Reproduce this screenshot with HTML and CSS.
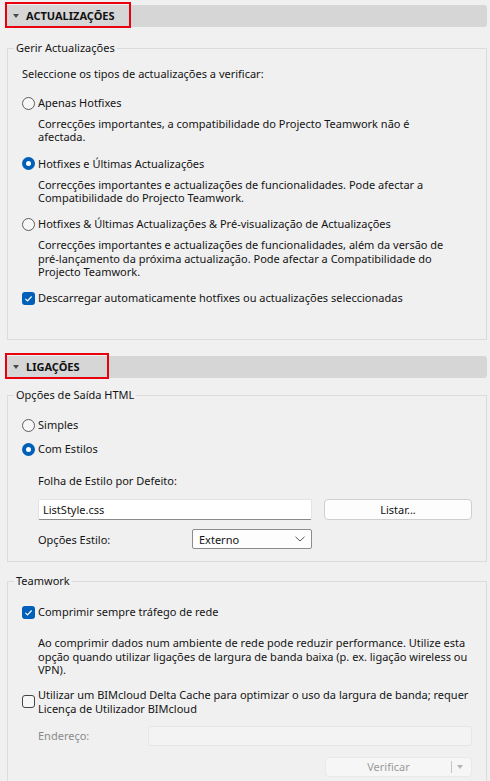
FILE: index.html
```html
<!DOCTYPE html>
<html lang="pt">
<head>
<meta charset="utf-8">
<title>Preferências</title>
<link rel="stylesheet" href="styles.css">
</head>
<body>
<div class="panel">
  <div class="section-head">
    <span class="mark mark-a"></span>
    <span class="caret"></span>
    <span class="head-title">ACTUALIZAÇÕES</span>
  </div>

  <fieldset class="group group-updates">
    <legend>Gerir Actualizações</legend>
    <div class="body body-updates">
      <p class="intro">Seleccione os tipos de actualizações a verificar:</p>
      <label class="opt"><span class="radio"></span>Apenas Hotfixes</label>
      <p class="desc">Correcções importantes, a compatibilidade do Projecto Teamwork não é<br>afectada.</p>
      <label class="opt"><span class="radio on"></span>Hotfixes e Últimas Actualizações</label>
      <p class="desc">Correcções importantes e actualizações de funcionalidades. Pode afectar a<br>Compatibilidade do Projecto Teamwork.</p>
      <label class="opt"><span class="radio"></span>Hotfixes &amp; Últimas Actualizações &amp; Pré-visualização de Actualizações</label>
      <p class="desc">Correcções importantes e actualizações de funcionalidades, além da versão de<br>pré-lançamento da próxima actualização. Pode afectar a Compatibilidade do<br>Projecto Teamwork.</p>
      <label class="opt"><span class="check on"><svg viewBox="0 0 13 13" width="13" height="13"><path d="M3.4 6.9 L5.5 8.9 L9.6 4.5" fill="none" stroke="#fff" stroke-width="1.2"/></svg></span>Descarregar automaticamente hotfixes ou actualizações seleccionadas</label>
    </div>
  </fieldset>

  <div class="section-head section-head-2">
    <span class="mark mark-b"></span>
    <span class="caret"></span>
    <span class="head-title">LIGAÇÕES</span>
  </div>

  <fieldset class="group group-html">
    <legend>Opções de Saída HTML</legend>
    <div class="body body-html">
      <label class="opt opt-first"><span class="radio"></span>Simples</label>
      <label class="opt opt-tight"><span class="radio on"></span>Com Estilos</label>
      <p class="field-label">Folha de Estilo por Defeito:</p>
      <div class="file-row">
        <span class="text-input">ListStyle.css</span>
        <span class="button">Listar...</span>
      </div>
      <div class="style-row">
        <span class="style-label">Opções Estilo:</span>
        <span class="select">Externo<svg class="chev" viewBox="0 0 10 6" width="10" height="6"><path d="M0.5 0.8 L5 5 L9.5 0.8" fill="none" stroke="#555" stroke-width="1"/></svg></span>
      </div>
    </div>
  </fieldset>

  <fieldset class="group group-team">
    <legend>Teamwork</legend>
    <div class="body body-team">
      <label class="opt opt-first-team"><span class="check on"><svg viewBox="0 0 13 13" width="13" height="13"><path d="M3.4 6.9 L5.5 8.9 L9.6 4.5" fill="none" stroke="#fff" stroke-width="1.2"/></svg></span>Comprimir sempre tráfego de rede</label>
      <p class="desc desc-team">Ao comprimir dados num ambiente de rede pode reduzir performance. Utilize esta<br>opção quando utilizar ligações de largura de banda baixa (p. ex. ligação wireless ou<br>VPN).</p>
      <label class="opt opt-multi"><span class="check"></span><span class="multi-text">Utilizar um BIMcloud Delta Cache para optimizar o uso da largura de banda; requer<br>Licença de Utilizador BIMcloud</span></label>
      <div class="addr-row">
        <span class="addr-label">Endereço:</span>
        <span class="text-input disabled"></span>
      </div>
      <div class="verify-row">
        <span class="split-button">
          <span class="split-main">Verificar</span>
          <span class="split-arrow"></span>
        </span>
      </div>
    </div>
  </fieldset>
</div>
</body>
</html>
```
FILE: styles.css
```css
html, body {
  margin: 0;
  padding: 0;
  overflow: hidden;
}

body {
  background: #f0f0f0;
  font-family: "Noto Sans", sans-serif;
  font-size: 11px;
  color: #141414;
  width: 490px;
  height: 781px;
}

p {
  margin: 0;
}

.section-head {
  position: relative;
  margin: 5px 3px 0 5px;
  height: 22px;
  background: #d6d6d6;
  border-radius: 3px;
  display: flex;
  align-items: center;
  padding-left: 8px;
  gap: 7px;
}

.section-head-2 {
  margin-top: 16px;
}

.mark {
  position: absolute;
  left: 0;
  top: -3px;
  height: 26px;
  border: 2px solid #e8000d;
  box-sizing: border-box;
}

.mark-a {
  width: 126px;
}

.mark-b {
  width: 104px;
}

.caret {
  width: 0;
  height: 0;
  border-left: 3.5px solid transparent;
  border-right: 3.5px solid transparent;
  border-top: 4px solid #4a4a4a;
}

.head-title {
  font-weight: 700;
  line-height: 16px;
  color: #111;
}

.group {
  margin: 13px 3px 0 7px;
  border: 1px solid #dcdcdc;
  padding: 0;
  min-width: 0;
}

.group legend {
  margin-left: 6px;
  padding: 0 2px;
  line-height: 16px;
}

.group-html {
  margin-top: 9px;
}

.group-team {
  margin-top: 11px;
}

.body {
  padding: 0 14px 33px 14px;
}

.body-html {
  padding-bottom: 12px;
}

.body-team {
  padding-bottom: 30px;
}

.intro {
  margin-top: 10px;
  line-height: 16px;
}

.opt {
  display: flex;
  align-items: center;
  gap: 3px;
  line-height: 16px;
  margin-top: 13px;
}

.desc {
  margin: 6px 0 0 16px;
  line-height: 13.33px;
}

.desc + .opt {
  margin-top: 12px;
}

.radio {
  width: 13px;
  height: 13px;
  box-sizing: border-box;
  border: 1px solid #5c5c5c;
  border-radius: 50%;
  background: #f7f7f7;
  flex: none;
  display: flex;
  align-items: center;
  justify-content: center;
}

.radio.on {
  border: none;
  background: #005fb8;
}

.radio.on::after {
  content: "";
  width: 5px;
  height: 5px;
  border-radius: 50%;
  background: #fff;
}

.check {
  width: 13px;
  height: 13px;
  box-sizing: border-box;
  border: 1px solid #444;
  border-radius: 3px;
  background: #f7f7f7;
  flex: none;
  display: flex;
}

.check.on {
  border: none;
  background: #005fb8;
}

.opt-first {
  margin-top: 14px;
}

.opt-tight {
  margin-top: 8px;
}

.field-label {
  margin: 16px 0 0 16px;
  line-height: 16px;
}

.file-row {
  display: flex;
  gap: 12px;
  margin: 10px 0 0 16px;
  height: 21px;
}

.text-input {
  flex: 1;
  box-sizing: border-box;
  background: #fff;
  border: 1px solid #e4e4e4;
  border-bottom-color: #8a8a8a;
  border-radius: 2px;
  padding-left: 4px;
  line-height: 19px;
}

.button {
  width: 148px;
  box-sizing: border-box;
  background: #fdfdfd;
  border: 1px solid #cfcfcf;
  border-radius: 4px;
  text-align: center;
  line-height: 19px;
}

.style-row {
  display: flex;
  align-items: center;
  justify-content: space-between;
  margin: 9px 0 0 16px;
  width: 274px;
  height: 20px;
}

.style-label {
  line-height: 16px;
  margin-top: 2px;
}

.select {
  width: 120px;
  height: 20px;
  box-sizing: border-box;
  border: 1px solid #8c8c8c;
  border-radius: 2px;
  background: #fdfdfd;
  padding: 0 6px;
  line-height: 17px;
  display: flex;
  align-items: center;
  justify-content: space-between;
}

.opt-first-team {
  margin-top: 15px;
}

.desc-team {
  margin-top: 16px;
}

.opt-multi {
  margin-top: 10px;
  line-height: 13.33px;
}

.addr-row {
  display: flex;
  align-items: center;
  margin: 11px 0 0 16px;
  height: 20px;
}

.addr-label {
  width: 110px;
  color: #8a8a8a;
}

.text-input.disabled {
  height: 20px;
  background: #f3f3f3;
  border: 1px solid #e6e6e6;
}

.verify-row {
  display: flex;
  justify-content: flex-end;
  margin-top: 11px;
}

.split-button {
  display: flex;
  width: 147px;
  height: 20px;
  box-sizing: border-box;
  background: #f6f6f6;
  border: 1px solid #e9e9e9;
  border-radius: 4px;
  color: #9b9b9b;
  align-items: center;
}

.split-main {
  width: 125px;
  text-align: center;
  line-height: 18px;
  border-right: 1px solid #c4c4c4;
  height: 12px;
  display: flex;
  align-items: center;
  justify-content: center;
}

.split-arrow {
  margin-left: 5px;
  width: 0;
  height: 0;
  border-left: 3.5px solid transparent;
  border-right: 3.5px solid transparent;
  border-top: 4px solid #b5b5b5;
}
```
